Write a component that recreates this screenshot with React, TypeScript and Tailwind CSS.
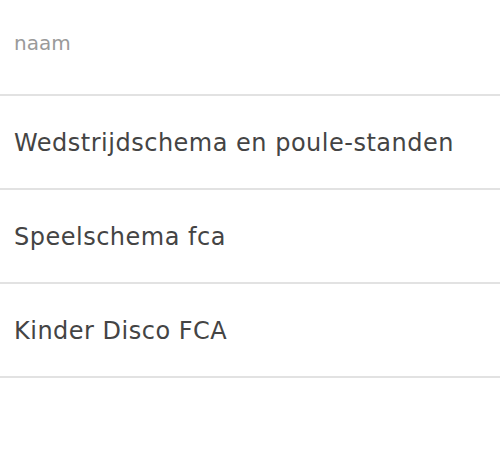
import React from 'react';

const items = ['Wedstrijdschema en poule-standen', 'Speelschema fca', 'Kinder Disco FCA'];

const App: React.FC = () => {
  return (
    <div className="w-[500px] h-[467px] bg-white" style={{ fontFamily: '"DejaVu Sans", "Liberation Sans", sans-serif' }}>
      <div className="h-[96px] flex items-center px-[14px] border-b-2 border-[#e2e2e2]">
        <span className="text-[20px] text-[#9a9a9a] -mt-[9px]">naam</span>
      </div>
      {items.map((name) => (
        <div key={name} className="h-[94px] flex items-center px-[14px] border-b-2 border-[#e2e2e2]">
          <span className="text-[24px] tracking-[0.5px] text-[#444444] mt-[2px]">{name}</span>
        </div>
      ))}
    </div>
  );
};

export default App;
